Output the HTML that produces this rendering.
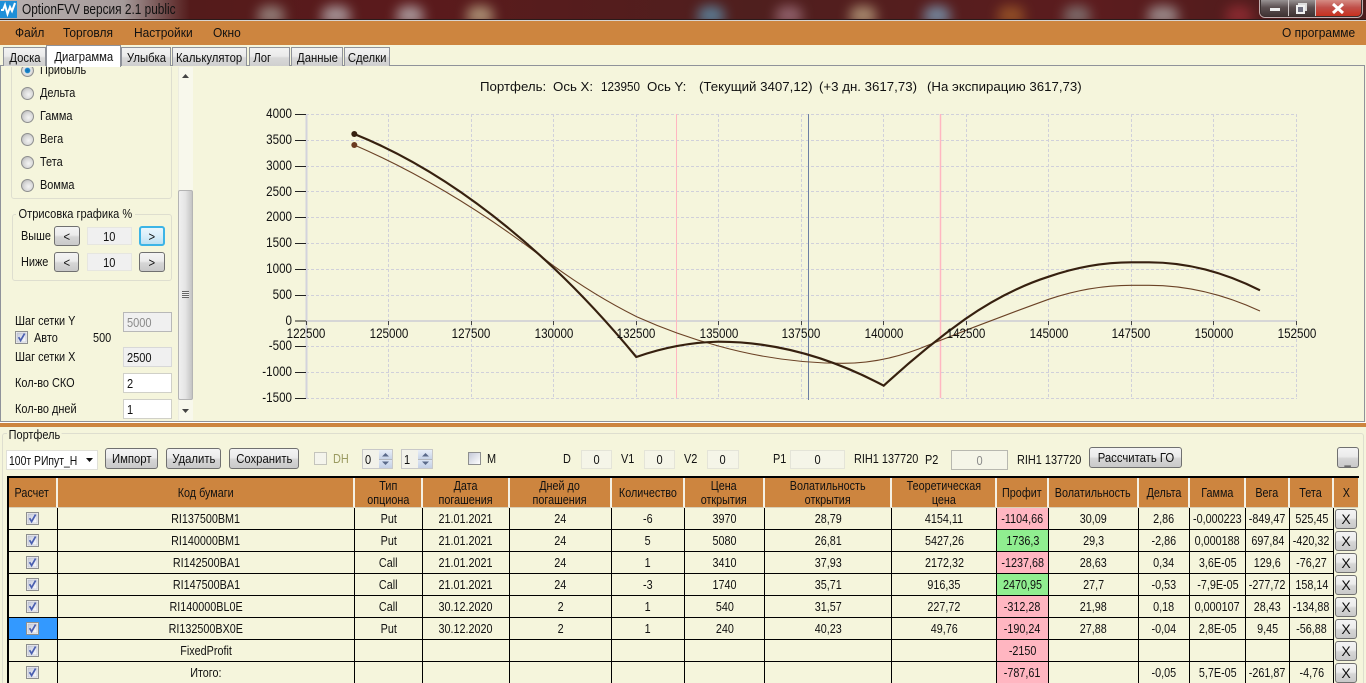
<!DOCTYPE html>
<html><head><meta charset="utf-8"><title>OptionFVV</title>
<style>
*{box-sizing:border-box}
html,body{margin:0;padding:0;width:1366px;height:683px;overflow:hidden;background:#F5F5DC}
body{position:relative;font-family:"Liberation Sans","Noto Sans CJK SC",sans-serif;font-size:13px;color:#111}
.a{position:absolute}
.t,.c,.r{position:absolute;white-space:nowrap;line-height:16px;z-index:3}
.t{transform:translate(0,-50%) scaleX(.84);transform-origin:left center}
.c{transform:translate(-50%,-50%) scaleX(.83);transform-origin:center center}
.r{transform:translate(-100%,-50%) scaleX(.83);transform-origin:right center}
.m{transform:translate(0,-50%) scaleX(.92)}
.h{transform:translate(0,-50%) scaleX(1.02);z-index:3}
.btn{position:absolute;border:1px solid #707070;border-radius:3px;background:linear-gradient(#f4f4f4,#ebebeb 45%,#d6d6d6 55%,#c9c9c9);text-align:center;display:flex;align-items:center;justify-content:center}
.btn span{display:inline-block;white-space:nowrap;transform:scaleX(.87)}
.inp{position:absolute;border:1px solid #d0d0c8;background:#fff;display:flex;align-items:center;justify-content:center}
.inp span{display:inline-block;transform:scaleX(.85)}
.tab{position:absolute;top:47px;height:19px;border:1px solid #8f929a;border-bottom:none;background:linear-gradient(#f2f2f2,#ebebeb 45%,#d8d8d8 55%,#cfcfcf);display:flex;align-items:center;justify-content:center}
.tab span{display:inline-block;white-space:nowrap;transform:scaleX(.87)}
.radio{position:absolute;left:21px;width:13px;height:13px;border-radius:50%;border:1px solid #8e8f8f;background:radial-gradient(circle at 60% 60%,#f4f4f4,#d8d8d8 50%,#a8a8a8)}
.blob{position:absolute;top:6px;width:26px;height:18px;filter:blur(6px);border-radius:40% 40% 10% 10%;opacity:.72}
.gb{position:absolute;border:1px solid #dedecf;border-radius:3px}
table{border-collapse:separate;border-spacing:0;table-layout:fixed;position:absolute;left:8px;top:478px;width:1350px}
td,th{padding:0;text-align:center;border-right:1px solid #000;border-bottom:1px solid #000;height:22px;overflow:visible;font-weight:normal;white-space:nowrap;position:relative;line-height:14px}
th{background:#CD853F;border-right:2px solid #f5f1e4;border-bottom:1px solid #d8d0b8;height:30px;padding-top:1px}
td span,th span{display:inline-block;margin:0 -30px;transform:scaleX(.83)}
td svg{display:block;margin:0 auto;width:13px;height:13px}
.pk{background:#FFB6C1}.gr{background:#90EE90}.sel{background:#3399FF}
td .x{position:absolute;left:1px;top:1px;width:22px;height:20px;border:1px solid #707070;border-radius:3px;background:linear-gradient(#f4f4f4,#ebebeb 45%,#d6d6d6 55%,#c9c9c9);display:flex;align-items:center;justify-content:center;margin:0;transform:none;font-size:14px}
</style></head><body>
<svg width="0" height="0" style="position:absolute"><defs>
<linearGradient id="cg" x1="0" y1="0" x2="1" y2="1"><stop offset="0" stop-color="#c4c9d8"/><stop offset=".6" stop-color="#e6e8f0"/><stop offset="1" stop-color="#fff"/></linearGradient>
<symbol id="ck" viewBox="0 0 13 13"><rect x=".5" y=".5" width="12" height="12" fill="#f2f2f2" stroke="#8e8f8f"/><rect x="2" y="2" width="9" height="9" fill="url(#cg)" stroke="#b5bac8" stroke-width=".6"/><path d="M3.6 6.2L5.6 9.6L9.6 2.6" fill="none" stroke="#4a5fb0" stroke-width="1.7"/></symbol>
</defs></svg>

<!-- title bar -->
<div class="a" style="left:0;top:0;width:1366px;height:21px;overflow:hidden;background:linear-gradient(90deg,#4e1c1a,#5b1a1c 30%,#4f1f1e 55%,#5c1c1e 80%,#4a1c1c)">
 <div class="blob" style="left:258px;background:#a9a49c"></div>
 <div class="blob" style="left:322px;width:28px;background:#c4c4c8"></div>
 <div class="blob" style="left:397px;background:#c8c8cc"></div>
 <div class="blob" style="left:467px;background:#cbbd96"></div>
 <div class="blob" style="left:698px;background:#5f9fc0"></div>
 <div class="blob" style="left:776px;background:#a87a88"></div>
 <div class="blob" style="left:850px;background:#c9b48e"></div>
 <div class="blob" style="left:924px;background:#7fb0d0"></div>
 <div class="blob" style="left:998px;background:#a8622a"></div>
 <div class="blob" style="left:1064px;background:#8a8a88"></div>
 <div class="blob" style="left:1148px;width:30px;background:#b4b4b4"></div>
 <div class="blob" style="left:1226px;background:#a03038"></div>
 <div class="a" style="left:0;top:0;width:190px;height:21px;background:linear-gradient(90deg,rgba(205,205,205,.85),rgba(185,185,185,.8) 65%,rgba(150,130,130,0))"></div>
</div>
<div class="a" style="left:0;top:19px;width:1366px;height:1px;background:#2a1a1a"></div>
<div class="a" style="left:0;top:20px;width:1366px;height:1px;background:#d9d4cf"></div>
<svg class="a" style="left:0;top:1px;z-index:3" width="17" height="17" viewBox="0 0 17 17"><rect width="17" height="17" fill="#1f8fd8"/><path d="M1 9H3L5 4L7.500 13L10 6L12 10L15 2" fill="none" stroke="#fff" stroke-width="2"/></svg>
<div class="t" style="left:22px;top:10px;font-size:15px;transform:translate(0,-50%) scaleX(.79);color:#111">OptionFVV версия 2.1 public</div>
<!-- window buttons -->
<div class="a" style="left:1260px;top:-2px;width:102px;height:19px;border:1px solid #3a3030;border-radius:0 0 5px 5px;box-shadow:0 0 0 1px rgba(255,255,255,.65);overflow:hidden;display:flex">
 <div style="width:28px;background:linear-gradient(#a09c9c,#5b4f50 50%,#403434);border-right:1px solid #cfc8c8;position:relative"><div class="a" style="left:9px;top:9px;width:10px;height:3px;background:#eee"></div></div>
 <div style="width:27px;background:linear-gradient(#a09c9c,#5b4f50 50%,#403434);border-right:1px solid #cfc8c8;position:relative"><div class="a" style="left:9px;top:4px;width:9px;height:8px;border:2px solid #ddd"></div><div class="a" style="left:7px;top:6px;width:9px;height:9px;border:2px solid #f0f0f0;background:#6f6f80"></div></div>
 <div style="flex:1;background:linear-gradient(#d8948c,#c0504a 50%,#c8301e);position:relative"><svg class="a" style="left:15px;top:4px" width="14" height="11"><path d="M2 1L12 10M12 1L2 10" stroke="#fff" stroke-width="3"/></svg></div>
</div>

<!-- menu -->
<div class="a" style="left:0;top:21px;width:1366px;height:24px;background:#CD853F"></div>
<div class="t m" style="left:15px;top:33px">Файл</div>
<div class="t m" style="left:63px;top:33px">Торговля</div>
<div class="t m" style="left:134px;top:33px">Настройки</div>
<div class="t m" style="left:213px;top:33px">Окно</div>
<div class="t m" style="left:1282px;top:33px">О программе</div>

<!-- tab page frame -->
<div class="a" style="left:0;top:65px;width:1365px;height:357px;border:1px solid #8f929a;background:#F5F5DC"></div>
<div class="a" style="left:0;top:422px;width:1366px;height:1px;background:#fff"></div>
<div class="a" style="left:0;top:423px;width:1366px;height:4px;background:#CD853F"></div>

<!-- tabs -->
<div class="tab" style="left:3px;width:43px"><span>Доска</span></div>
<div class="tab" style="left:121px;width:50px"><span>Улыбка</span></div>
<div class="tab" style="left:172px;width:75px"><span>Калькулятор</span></div>
<div class="tab" style="left:249px;width:41px;justify-content:flex-start;padding-left:2px"><span>Лог</span></div>
<div class="tab" style="left:291px;width:52px"><span>Данные</span></div>
<div class="tab" style="left:344px;width:46px"><span>Сделки</span></div>
<div class="tab" style="left:46px;top:45px;width:75px;height:22px;background:#fff;z-index:2"><span>Диаграмма</span></div>

<!-- left panel -->
<div class="a" style="left:2px;top:67px;width:192px;height:354px;overflow:hidden">
 <div class="gb" style="left:9px;top:-10px;width:161px;height:142px"></div>
 <div class="radio" style="top:-3px;left:19px;background:radial-gradient(circle,#0d6fb8 0,#1a86c8 30%,#e8e8e8 42%,#bdbdbd)"></div>
 <div class="t" style="left:38px;top:3px">Прибыль</div>
</div>
<div class="radio" style="top:87px"></div><div class="t" style="left:40px;top:93px">Дельта</div>
<div class="radio" style="top:110px"></div><div class="t" style="left:40px;top:116px">Гамма</div>
<div class="radio" style="top:133px"></div><div class="t" style="left:40px;top:139px">Вега</div>
<div class="radio" style="top:156px"></div><div class="t" style="left:40px;top:162px">Тета</div>
<div class="radio" style="top:179px"></div><div class="t" style="left:40px;top:185px">Вомма</div>

<!-- scrollbar -->
<div class="a" style="left:178px;top:67px;width:15px;height:353px;background:#f8f8ec;border-left:1px solid #ecece0"></div>
<svg class="a" style="left:181px;top:73px" width="9" height="6"><path d="M4.500 1L8 5H1Z" fill="#444"/></svg>
<div class="a" style="left:178px;top:190px;width:15px;height:210px;background:linear-gradient(90deg,#f0f0f0,#e4e4e4 50%,#c4c4c4);border:1px solid #b4b4b4;border-radius:2px"></div>
<div class="a" style="left:182px;top:291px;width:7px;height:7px;background:repeating-linear-gradient(#666 0 1px,#eee 1px 2px)"></div>
<svg class="a" style="left:181px;top:408px" width="9" height="6"><path d="M1 1H8L4.500 5Z" fill="#444"/></svg>

<!-- Отрисовка -->
<div class="gb" style="left:12px;top:214px;width:160px;height:67px"></div>
<div class="t" style="left:16px;top:214px;background:#F5F5DC;padding:0 3px;transform:translate(0,-50%) scaleX(.85)">Отрисовка графика %</div>
<div class="t" style="left:21px;top:236px">Выше</div>
<div class="btn" style="left:54px;top:226px;width:26px;height:20px"><span>&lt;</span></div>
<div class="inp" style="left:87px;top:227px;width:45px;height:18px;background:#f0f0f0;border-color:#e6e6e0"><span>10</span></div>
<div class="btn" style="left:139px;top:226px;width:26px;height:20px;border:2px solid #3cb4e6;background:linear-gradient(#eaf6fc,#d8eef9 50%,#bde0f2)"><span>&gt;</span></div>
<div class="t" style="left:21px;top:262px">Ниже</div>
<div class="btn" style="left:54px;top:252px;width:25px;height:20px"><span>&lt;</span></div>
<div class="inp" style="left:87px;top:253px;width:45px;height:18px;background:#f0f0f0;border-color:#e6e6e0"><span>10</span></div>
<div class="btn" style="left:139px;top:252px;width:26px;height:20px"><span>&gt;</span></div>

<div class="t" style="left:15px;top:321px">Шаг сетки Y</div>
<div class="inp" style="left:123px;top:312px;width:49px;height:20px;background:#f0f0f0;border-color:#b8b8b8;justify-content:flex-start;padding-left:3px"><span style="color:#8a8a8a;transform-origin:left">5000</span></div>
<svg class="a" style="left:15px;top:331px" width="13" height="13"><use href="#ck"/></svg>
<div class="t" style="left:34px;top:338px">Авто</div>
<div class="t" style="left:93px;top:338px">500</div>
<div class="t" style="left:15px;top:357px">Шаг сетки X</div>
<div class="inp" style="left:123px;top:347px;width:49px;height:20px;background:#f0f0f0;border-color:#d8d8d8;justify-content:flex-start;padding-left:3px"><span style="transform-origin:left">2500</span></div>
<div class="t" style="left:15px;top:383px">Кол-во СКО</div>
<div class="inp" style="left:123px;top:373px;width:49px;height:20px;justify-content:flex-start;padding-left:3px"><span style="transform-origin:left">2</span></div>
<div class="t" style="left:15px;top:409px">Кол-во дней</div>
<div class="inp" style="left:123px;top:399px;width:49px;height:20px;justify-content:flex-start;padding-left:3px"><span style="transform-origin:left">1</span></div>

<!-- chart -->
<svg class="a" style="left:0;top:0;z-index:1" width="1366" height="420" viewBox="0 0 1366 420">
 <g stroke="#d0d0da" stroke-width="1" stroke-dasharray="3 2" fill="none">
  <path d="M306 114.500H1297M306 140.500H1297M306 166.500H1297M306 191.500H1297M306 217.500H1297M306 243.500H1297M306 269.500H1297M306 295.500H1297M306 346.500H1297M306 372.500H1297M306 398.500H1297"/>
  <path d="M388.500 114V398M471.500 114V398M553.500 114V398M636.500 114V398M718.500 114V398M801.500 114V398M883.500 114V398M966.500 114V398M1048.500 114V398M1131.500 114V398M1213.500 114V398M1296.500 114V398"/>
 </g>
 <path d="M306 321H1297" stroke="#d6d6d6" stroke-width="2"/>
 <path d="M306.500 114V398" stroke="#d3d3dc" stroke-width="2"/>
 <path d="M295 114.500H306M295 140.500H306M295 166.500H306M295 191.500H306M295 217.500H306M295 243.500H306M295 269.500H306M295 295.500H306M295 321H306M295 346.500H306M295 372.500H306M295 398.500H306" stroke="#222" stroke-width="1"/>
 <path d="M306.500 321V325M388.500 321V325M471.500 321V325M553.500 321V325M636.500 321V325M718.500 321V325M801.500 321V325M883.500 321V325M966.500 321V325M1048.500 321V325M1131.500 321V325M1213.500 321V325M1296.500 321V325" stroke="#444" stroke-width="1"/>
 <path d="M676.500 114V398" stroke="#ffb6c1" stroke-width="1"/>
 <path d="M940.500 114V398" stroke="#ffb6c1" stroke-width="1.500"/>
 <path d="M808.500 114V400" stroke="#6c7fa4" stroke-width="1"/>
 <path d="M354.300 145Q453.800 188 553.300 265.700Q595 296 636.700 316.700Q677.500 335 718.400 346Q780.600 363.300 842.900 363.300Q885.700 363.300 928.600 345Q988.600 321 1048.600 299.300Q1090 285.300 1131.400 285.300L1149 285.300Q1204.500 285.300 1260 311" fill="none" stroke="#6b4226" stroke-width="1.100"/>
 <path d="M354.300 134Q454 174 553.700 268Q595 307 636.300 357Q677.300 342.600 718.400 341.700Q801 341.700 883.700 385.700Q924.500 348 965.300 319Q1007 290 1048.600 276.700Q1090 262.300 1131.400 262.300L1149 262.300Q1204.500 262.300 1260 290.300" fill="none" stroke="#36200f" stroke-width="2.200"/>
 <circle cx="354.300" cy="134" r="3" fill="#36200f"/>
 <circle cx="354.300" cy="145" r="3" fill="#6b3a20"/>
</svg>
<div class="t h" style="left:480px;top:87px">Портфель:</div>
<div class="t h" style="left:553px;top:87px">Ось X:</div>
<div class="t h" style="left:601px;top:87px;transform:translate(0,-50%) scaleX(.9)">123950</div>
<div class="t h" style="left:647px;top:87px">Ось Y:</div>
<div class="t h" style="left:699px;top:87px">(Текущий 3407,12)</div>
<div class="t h" style="left:819px;top:87px">(+3 дн. 3617,73)</div>
<div class="t h" style="left:927px;top:87px">(На экспирацию 3617,73)</div>
<div class="r" style="left:292px;top:113px;font-size:14px">4000</div>
<div class="r" style="left:292px;top:139px;font-size:14px">3500</div>
<div class="r" style="left:292px;top:165px;font-size:14px">3000</div>
<div class="r" style="left:292px;top:191px;font-size:14px">2500</div>
<div class="r" style="left:292px;top:216px;font-size:14px">2000</div>
<div class="r" style="left:292px;top:242px;font-size:14px">1500</div>
<div class="r" style="left:292px;top:268px;font-size:14px">1000</div>
<div class="r" style="left:292px;top:294px;font-size:14px">500</div>
<div class="r" style="left:292px;top:320px;font-size:14px">0</div>
<div class="r" style="left:292px;top:345px;font-size:14px">-500</div>
<div class="r" style="left:292px;top:371px;font-size:14px">-1000</div>
<div class="r" style="left:292px;top:397px;font-size:14px">-1500</div>
<div class="c" style="left:306px;top:333px;font-size:14px">122500</div>
<div class="c" style="left:389px;top:333px;font-size:14px">125000</div>
<div class="c" style="left:471px;top:333px;font-size:14px">127500</div>
<div class="c" style="left:554px;top:333px;font-size:14px">130000</div>
<div class="c" style="left:636px;top:333px;font-size:14px">132500</div>
<div class="c" style="left:719px;top:333px;font-size:14px">135000</div>
<div class="c" style="left:801px;top:333px;font-size:14px">137500</div>
<div class="c" style="left:884px;top:333px;font-size:14px">140000</div>
<div class="c" style="left:966px;top:333px;font-size:14px">142500</div>
<div class="c" style="left:1049px;top:333px;font-size:14px">145000</div>
<div class="c" style="left:1131px;top:333px;font-size:14px">147500</div>
<div class="c" style="left:1214px;top:333px;font-size:14px">150000</div>
<div class="c" style="left:1297px;top:333px;font-size:14px">152500</div>

<!-- portfolio -->
<div class="gb" style="left:2px;top:433px;width:1362px;height:260px"></div>
<div class="t" style="left:7px;top:435px;background:#F5F5DC;padding:0 2px">Портфель</div>
<div class="inp" style="left:6px;top:450px;width:92px;height:20px;justify-content:flex-start;padding-left:2px;border-color:#e0e0d8;overflow:hidden"><span style="transform-origin:left;white-space:nowrap;transform:scaleX(.8)">100т РИпут_Н</span></div>
<svg class="a" style="left:85px;top:457px;z-index:3" width="9" height="6"><path d="M1 1H8L4.500 5Z" fill="#111"/></svg>
<div class="btn" style="left:105px;top:448px;width:53px;height:21px"><span>Импорт</span></div>
<div class="btn" style="left:166px;top:448px;width:55px;height:21px"><span>Удалить</span></div>
<div class="btn" style="left:229px;top:448px;width:70px;height:21px"><span>Сохранить</span></div>
<div class="a" style="left:314px;top:452px;width:13px;height:13px;border:1px solid #c4c4bc;background:#f4f4ec"></div>
<div class="t" style="left:333px;top:459px;color:#9a9a60">DH</div>
<div class="inp" style="left:362px;top:449px;width:31px;height:20px;border-color:#c8c8c8;background:#f2f2ea;justify-content:flex-start;padding-left:2px"><span style="transform-origin:left">0</span></div>
<div class="a" style="left:379px;top:450px;width:13px;height:18px;background:linear-gradient(#e8eef8,#c8d4e8 49%,#8a8a8a 49%,#8a8a8a 52%,#dde6f4 52%,#c4d0e6)"></div>
<svg class="a" style="left:381px;top:452px" width="9" height="14"><path d="M4.500 1L8 4.500H1ZM1 9.500H8L4.500 13Z" fill="#5a6a8a"/></svg>
<div class="inp" style="left:401px;top:449px;width:32px;height:20px;border-color:#c8c8c8;background:#f2f2ea;justify-content:flex-start;padding-left:2px"><span style="transform-origin:left">1</span></div>
<div class="a" style="left:418px;top:450px;width:14px;height:18px;background:linear-gradient(#e8eef8,#c8d4e8 49%,#8a8a8a 49%,#8a8a8a 52%,#dde6f4 52%,#c4d0e6)"></div>
<svg class="a" style="left:421px;top:452px" width="9" height="14"><path d="M4.500 1L8 4.500H1ZM1 9.500H8L4.500 13Z" fill="#5a6a8a"/></svg>
<div class="a" style="left:468px;top:452px;width:13px;height:13px;border:1px solid #8e8f8f;background:linear-gradient(135deg,#c4c9d8,#fff)"></div>
<div class="t" style="left:487px;top:459px">M</div>
<div class="t" style="left:563px;top:459px">D</div>
<div class="inp" style="left:581px;top:450px;width:31px;height:19px;background:#f5f5e8;border-color:#e4e4d8"><span>0</span></div>
<div class="t" style="left:621px;top:459px">V1</div>
<div class="inp" style="left:644px;top:450px;width:31px;height:19px;background:#f5f5e8;border-color:#e4e4d8"><span>0</span></div>
<div class="t" style="left:684px;top:459px">V2</div>
<div class="inp" style="left:707px;top:450px;width:32px;height:19px;background:#f5f5e8;border-color:#e4e4d8"><span>0</span></div>
<div class="t" style="left:773px;top:459px">P1</div>
<div class="inp" style="left:790px;top:450px;width:55px;height:19px;background:#f5f5e8;border-color:#e4e4d8"><span>0</span></div>
<div class="t" style="left:854px;top:459px">RIH1 137720</div>
<div class="t" style="left:925px;top:460px">P2</div>
<div class="inp" style="left:951px;top:450px;width:57px;height:20px;background:#f5f5e8;border-color:#b8b8b0"><span style="color:#8a8a8a">0</span></div>
<div class="t" style="left:1017px;top:460px">RIH1 137720</div>
<div class="btn" style="left:1089px;top:447px;width:93px;height:21px"><span>Рассчитать ГО</span></div>
<div class="btn" style="left:1337px;top:447px;width:22px;height:21px"><span style="margin-top:4px">_</span></div>

<!-- table -->
<div class="a" style="left:7px;top:476px;width:1352px;height:207px;border-left:2px solid #000;border-top:2px solid #000;z-index:2"></div>
<table>
<colgroup><col style="width:50px"><col style="width:297px"><col style="width:68px"><col style="width:87px"><col style="width:102px"><col style="width:73px"><col style="width:80px"><col style="width:127px"><col style="width:105px"><col style="width:52px"><col style="width:90px"><col style="width:51px"><col style="width:56px"><col style="width:44px"><col style="width:44px"><col style="width:24px"></colgroup>
<tr><th><span>Расчет</span></th><th><span>Код бумаги</span></th><th><span>Тип<br>опциона</span></th><th><span>Дата<br>погашения</span></th><th><span>Дней до<br>погашения</span></th><th><span>Количество</span></th><th><span>Цена<br>открытия</span></th><th><span>Волатильность<br>открытия</span></th><th><span>Теоретическая<br>цена</span></th><th><span>Профит</span></th><th><span>Волатильность</span></th><th><span>Дельта</span></th><th><span>Гамма</span></th><th><span>Вега</span></th><th><span>Тета</span></th><th style="border-right:none"><span>X</span></th></tr>
<tr><td><svg><use href="#ck"/></svg></td><td><span>RI137500BM1</span></td><td><span>Put</span></td><td><span>21.01.2021</span></td><td><span>24</span></td><td><span>-6</span></td><td><span>3970</span></td><td><span>28,79</span></td><td><span>4154,11</span></td><td class="pk"><span>-1104,66</span></td><td><span>30,09</span></td><td><span>2,86</span></td><td><span>-0,000223</span></td><td><span>-849,47</span></td><td><span>525,45</span></td><td style="border:none"><span class="x">X</span></td></tr>
<tr><td><svg><use href="#ck"/></svg></td><td><span>RI140000BM1</span></td><td><span>Put</span></td><td><span>21.01.2021</span></td><td><span>24</span></td><td><span>5</span></td><td><span>5080</span></td><td><span>26,81</span></td><td><span>5427,26</span></td><td class="gr"><span>1736,3</span></td><td><span>29,3</span></td><td><span>-2,86</span></td><td><span>0,000188</span></td><td><span>697,84</span></td><td><span>-420,32</span></td><td style="border:none"><span class="x">X</span></td></tr>
<tr><td><svg><use href="#ck"/></svg></td><td><span>RI142500BA1</span></td><td><span>Call</span></td><td><span>21.01.2021</span></td><td><span>24</span></td><td><span>1</span></td><td><span>3410</span></td><td><span>37,93</span></td><td><span>2172,32</span></td><td class="pk"><span>-1237,68</span></td><td><span>28,63</span></td><td><span>0,34</span></td><td><span>3,6E-05</span></td><td><span>129,6</span></td><td><span>-76,27</span></td><td style="border:none"><span class="x">X</span></td></tr>
<tr><td><svg><use href="#ck"/></svg></td><td><span>RI147500BA1</span></td><td><span>Call</span></td><td><span>21.01.2021</span></td><td><span>24</span></td><td><span>-3</span></td><td><span>1740</span></td><td><span>35,71</span></td><td><span>916,35</span></td><td class="gr"><span>2470,95</span></td><td><span>27,7</span></td><td><span>-0,53</span></td><td><span>-7,9E-05</span></td><td><span>-277,72</span></td><td><span>158,14</span></td><td style="border:none"><span class="x">X</span></td></tr>
<tr><td><svg><use href="#ck"/></svg></td><td><span>RI140000BL0E</span></td><td><span>Call</span></td><td><span>30.12.2020</span></td><td><span>2</span></td><td><span>1</span></td><td><span>540</span></td><td><span>31,57</span></td><td><span>227,72</span></td><td class="pk"><span>-312,28</span></td><td><span>21,98</span></td><td><span>0,18</span></td><td><span>0,000107</span></td><td><span>28,43</span></td><td><span>-134,88</span></td><td style="border:none"><span class="x">X</span></td></tr>
<tr><td class="sel"><svg><use href="#ck"/></svg></td><td><span>RI132500BX0E</span></td><td><span>Put</span></td><td><span>30.12.2020</span></td><td><span>2</span></td><td><span>1</span></td><td><span>240</span></td><td><span>40,23</span></td><td><span>49,76</span></td><td class="pk"><span>-190,24</span></td><td><span>27,88</span></td><td><span>-0,04</span></td><td><span>2,8E-05</span></td><td><span>9,45</span></td><td><span>-56,88</span></td><td style="border:none"><span class="x">X</span></td></tr>
<tr><td><svg><use href="#ck"/></svg></td><td><span>FixedProfit</span></td><td></td><td></td><td></td><td></td><td></td><td></td><td></td><td class="pk"><span>-2150</span></td><td></td><td></td><td></td><td></td><td></td><td style="border:none"><span class="x">X</span></td></tr>
<tr><td><svg><use href="#ck"/></svg></td><td><span>Итого:</span></td><td></td><td></td><td></td><td></td><td></td><td></td><td></td><td class="pk"><span>-787,61</span></td><td></td><td><span>-0,05</span></td><td><span>5,7E-05</span></td><td><span>-261,87</span></td><td><span>-4,76</span></td><td style="border:none"><span class="x">X</span></td></tr>
</table>
</body></html>
